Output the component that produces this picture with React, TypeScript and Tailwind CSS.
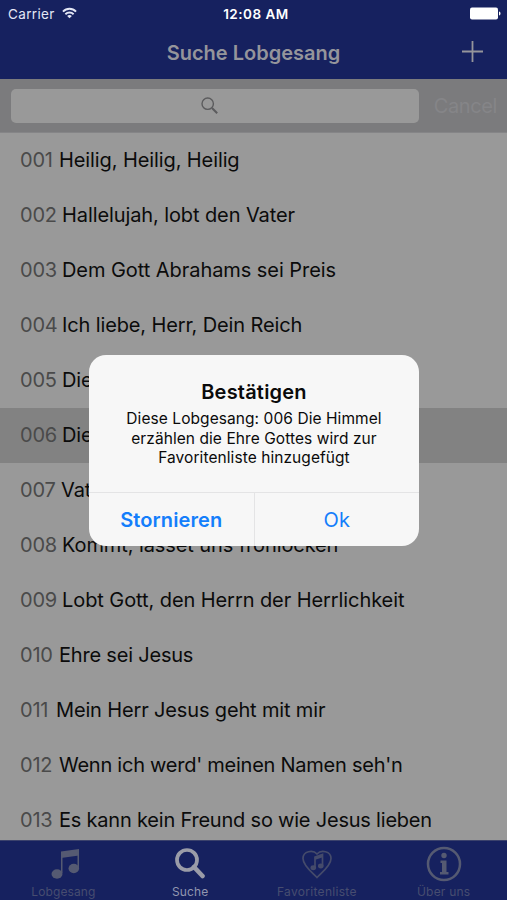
import type { ReactNode } from "react";

type Song = { no: string; title: string; numWidth: string; tracking: string };

const SONGS: Song[] = [
  { no: "001", title: "Heilig, Heilig, Heilig", numWidth: "w-[33px]", tracking: "tracking-[-0.1px]" },
  { no: "002", title: "Hallelujah, lobt den Vater", numWidth: "w-9", tracking: "tracking-[-0.1px]" },
  { no: "003", title: "Dem Gott Abrahams sei Preis", numWidth: "w-9", tracking: "tracking-[-0.06px]" },
  { no: "004", title: "Ich liebe, Herr, Dein Reich", numWidth: "w-9", tracking: "tracking-[-0.13px]" },
  { no: "005", title: "Die", numWidth: "w-9", tracking: "tracking-[-0.1px]" },
  { no: "006", title: "Die", numWidth: "w-9", tracking: "tracking-[-0.1px]" },
  { no: "007", title: "Vat", numWidth: "w-[35px]", tracking: "tracking-[-0.1px]" },
  { no: "008", title: "Kommt, lasset uns frohlocken", numWidth: "w-9", tracking: "tracking-[-0.1px]" },
  { no: "009", title: "Lobt Gott, den Herrn der Herrlichkeit", numWidth: "w-9", tracking: "tracking-[-0.08px]" },
  { no: "010", title: "Ehre sei Jesus", numWidth: "w-[33px]", tracking: "tracking-[-0.2px]" },
  { no: "011", title: "Mein Herr Jesus geht mit mir", numWidth: "w-[30px]", tracking: "tracking-[-0.15px]" },
  { no: "012", title: "Wenn ich werd' meinen Namen seh'n", numWidth: "w-[33px]", tracking: "tracking-[-0.25px]" },
  { no: "013", title: "Es kann kein Freund so wie Jesus lieben", numWidth: "w-[33px]", tracking: "tracking-[-0.21px]" },
];

const SELECTED = "006";

function StatusBar() {
  return (
    <div className="grid h-7 grid-cols-3 items-center pl-[8px] pr-[6px] text-[13.5px] text-[#e4e7f5]">
      <div className="flex items-center gap-[7px]">
        <span className="tracking-[0.35px]">Carrier</span>
        <svg className="mb-[3px]" width="15" height="12" viewBox="0 0 16 12" fill="none" stroke="currentColor" strokeWidth="2">
          <path d="M1 4.6C5 .4 11 .4 15 4.6" />
          <path d="M3.6 7.3c2.5-2.5 6.3-2.5 8.8 0" />
          <path d="M8 11.6 5.5 9.1c1.4-1.3 3.6-1.3 5 0Z" fill="currentColor" stroke="none" />
        </svg>
      </div>
      <span className="whitespace-nowrap pl-[3px] text-center font-semibold tracking-[0.5px] text-white">12:08 AM</span>
      <svg className="mb-px justify-self-end" width="31" height="13" viewBox="0 0 31 13" fill="#fff">
        <rect x="0" y="0.5" width="28" height="12" rx="2" />
        <path d="M29 4.5c2 .6 2 3.4 0 4Z" />
      </svg>
    </div>
  );
}

function NavBar() {
  return (
    <div className="grid h-[51px] grid-cols-[1fr_auto_1fr] items-center px-6 text-[#95959b]">
      <span />
      <h1 className="pb-[2px] text-xl font-semibold">Suche Lobgesang</h1>
      <svg className="mb-[5px] justify-self-end" width="21" height="21" viewBox="0 0 21 21" stroke="currentColor" strokeWidth="1.8">
        <path d="M10.5 0v21M0 10.5h21" />
      </svg>
    </div>
  );
}

function SearchBar() {
  return (
    <div className="flex h-[54px] shrink-0 items-center border-b border-[#858587] bg-[#7b7b7d] pl-[11px] pr-[10px]">
      <div className="flex h-[34px] w-[408px] items-center justify-center rounded-[5px] bg-[#999]">
        <svg className="mr-[11px]" width="17" height="17" viewBox="0 0 17 17" fill="none" stroke="#5b5b5d" strokeWidth="1.4">
          <circle cx="6.7" cy="6.7" r="5.7" />
          <path d="m11 11 5.2 5.2" strokeWidth="2" />
        </svg>
      </div>
      <span className="ml-auto text-[20px] tracking-[-0.4px] text-[#858588]">Cancel</span>
    </div>
  );
}

function SongRow({ no, title, numWidth, tracking }: Song) {
  return (
    <li
      className={`flex h-[55px] shrink-0 items-center gap-[6px] whitespace-nowrap pb-px pl-5 text-xl ${
        no === SELECTED ? "bg-[#828282]" : ""
      }`}
    >
      <span className={`tracking-[-0.2px] text-[#4a4a4a] ${numWidth}`}>{no}</span>
      <span className={`text-[#0b0b0b] ${tracking}`}>{title}</span>
    </li>
  );
}

function TabItem({ label, className, children }: { label: string; className: string; children: ReactNode }) {
  return (
    <div className={`flex flex-1 flex-col items-center ${className}`}>
      <div className="flex h-[45px] items-center">{children}</div>
      <span className="text-xs leading-3">{label}</span>
    </div>
  );
}

function TabBar() {
  return (
    <nav className="flex h-[60px] shrink-0 border-t border-[#3b426c] bg-[#16215f]">
      <TabItem label="Lobgesang" className="tracking-[0.1px] text-[#474d70]">
        <svg className="ml-[3px]" width="30" height="32" viewBox="0 0 30 32" fill="#555a72">
          <path d="M11 3.5 29 1v6.5L11 10Z" />
          <path d="M11 4h1.5v21H11zM27.500 2H29v19h-1.500z" />
          <ellipse cx="7" cy="26" rx="5.5" ry="4.7" />
          <ellipse cx="23.8" cy="20.5" rx="5.3" ry="4.7" />
        </svg>
      </TabItem>
      <TabItem label="Suche" className="tracking-[0.1px] text-[#9296b0]">
        <svg width="30" height="31" viewBox="0 0 30 31" fill="none" stroke="#9a9ca8">
          <circle cx="12" cy="12" r="10" strokeWidth="3.7" />
          <path d="m19 19 8.500 9" strokeWidth="4.6" strokeLinecap="round" />
        </svg>
      </TabItem>
      <TabItem label="Favoritenliste" className="tracking-[0.3px] text-[#474d70]">
        <svg width="32" height="30" viewBox="0 0 32 30" fill="none" stroke="#454b6b" strokeWidth="1.7">
          <path d="M16 28.5C12 24 2 17 2 9.500 2 2 12 .5 16 5c4-4.500 14-3 14 4.500C30 17 20 24 16 28.500Z" />
          <path d="M14 18.500V8l7.500-2.500v11" />
          <path d="m14 9.500 7.500-2.500" strokeWidth="2.5" />
          <ellipse cx="12.3" cy="18.8" rx="2" ry="1.600" fill="#454b6b" />
          <ellipse cx="19.800" cy="17" rx="2" ry="1.600" fill="#454b6b" />
        </svg>
      </TabItem>
      <TabItem label="Über uns" className="tracking-[0.2px] text-[#474d70]">
        <svg width="36" height="36" viewBox="0 0 36 36" fill="#555a72">
          <circle cx="18" cy="18" r="16" fill="none" stroke="#555a72" strokeWidth="2.5" />
          <circle cx="18" cy="9.5" r="2.7" />
          <path d="M14.500 14.500h6V26h2v2.500h-8.500V26h2v-9h-1.500Z" />
        </svg>
      </TabItem>
    </nav>
  );
}

function ConfirmDialog() {
  return (
    <div className="absolute left-[89px] top-[355px] flex h-[191px] w-[330px] flex-col overflow-hidden rounded-[17px] bg-[#f7f7f7] text-center">
      <div className="flex h-[137px] flex-col items-center whitespace-nowrap pt-[25px] text-[#0a0a0a]">
        <h2 className="text-[20px] font-semibold leading-6 tracking-[0.2px]">Bestätigen</h2>
        <p className="mt-[5px] text-[15.5px] leading-[19.5px] tracking-[0.07px]">
          Diese Lobgesang: 006 Die Himmel
          <br />
          erzählen die Ehre Gottes wird zur
          <br />
          Favoritenliste hinzugefügt
        </p>
      </div>
      <div className="flex flex-1 border-t border-[#e4e4e5] text-[20px] text-[#147efb]">
        <button className="flex-1 border-r border-[#e4e4e5] pt-px font-semibold tracking-[0.1px]">Stornieren</button>
        <button className="flex-1 pt-px">Ok</button>
      </div>
    </div>
  );
}

export default function App() {
  return (
    <div className="relative flex h-[900px] w-[507px] flex-col overflow-hidden bg-[#999] font-['Inter',sans-serif]">
      <header className="h-[79px] shrink-0 bg-[#16215f]">
        <StatusBar />
        <NavBar />
      </header>
      <SearchBar />
      <ul className="flex min-h-0 flex-1 flex-col overflow-hidden">
        {SONGS.map((song) => (
          <SongRow key={song.no} {...song} />
        ))}
      </ul>
      <TabBar />
      <ConfirmDialog />
    </div>
  );
}
